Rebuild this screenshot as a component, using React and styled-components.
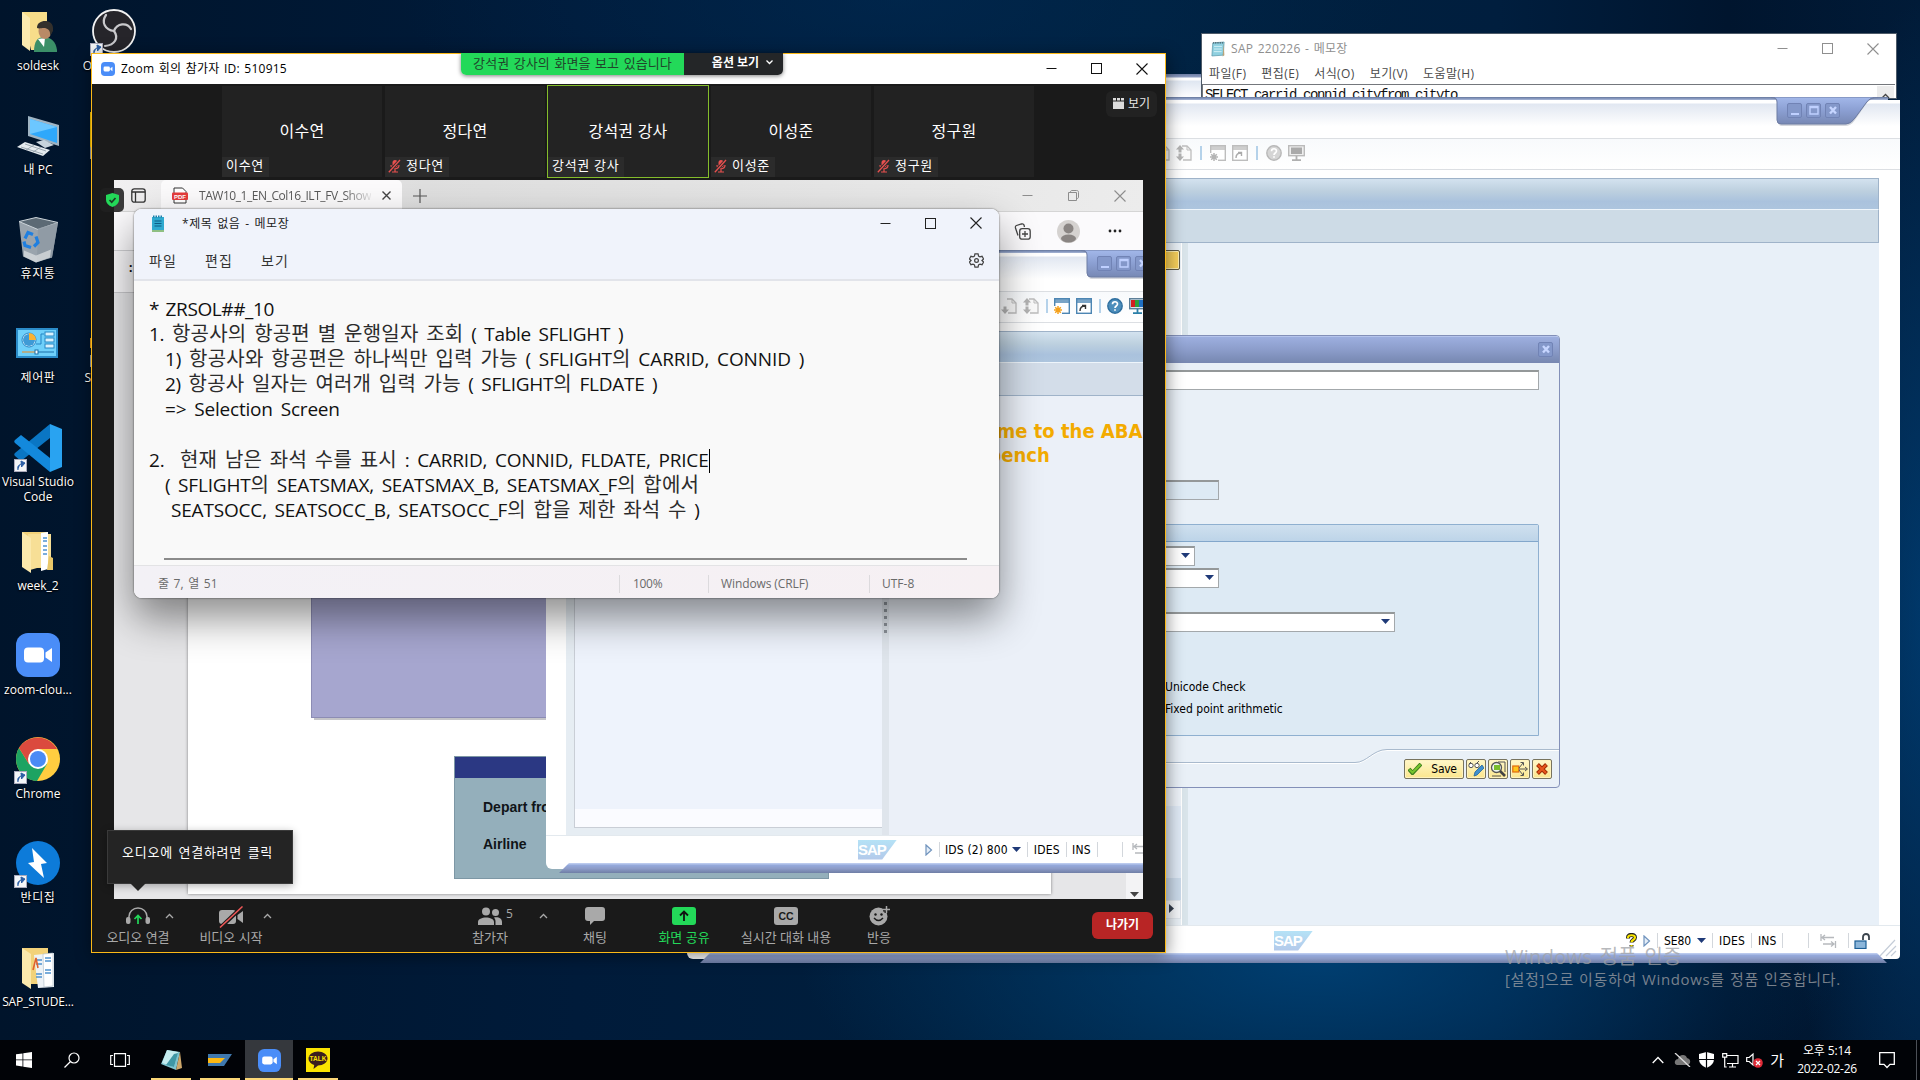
import React from "react";
import styled, { createGlobalStyle, css } from "styled-components";

const Global = createGlobalStyle`
  * { box-sizing: border-box; }
  body { margin: 0; overflow: hidden; background: #001730; }
  svg { display: block; flex: none; }
`;

const ui = `"Open Sans", "Noto Sans CJK KR", sans-serif`;
const tahoma = `"DejaVu Sans Condensed", "DejaVu Sans", "Noto Sans CJK KR", sans-serif`;

/* ---------- shared ---------- */
const Desktop = styled.main`
  position: relative;
  width: 1920px;
  height: 1080px;
  overflow: hidden;
  font-family: ${ui};
  font-size: 12px;
  line-height: 16px;
  background:
    radial-gradient(ellipse 520px 200px at 1320px 960px, rgba(0, 68, 122, 0.85), rgba(0, 60, 112, 0) 100%),
    radial-gradient(ellipse 160px 620px at 1930px 620px, rgba(0, 70, 130, 0.7), rgba(0, 50, 100, 0)),
    radial-gradient(ellipse 500px 160px at 900px 0, rgba(0, 44, 88, 0.5), rgba(0, 40, 80, 0)),
    linear-gradient(90deg, #00142b 0, #001b3a 30%, #00213f 60%, #001e3e 78%, #00152e 90%, #011b38 100%);
`;

const Text = styled.span`
  white-space: pre;
  flex: none;
  font-size: ${(p) => p.$s || 12}px;
  font-weight: ${(p) => p.$b || 400};
  color: ${(p) => p.$c || "inherit"};
  letter-spacing: ${(p) => p.$ls || 0}px;
  word-spacing: ${(p) => p.$ws || 0}px;
`;
const Hangul = styled.span`
  font-size: 20px;
  letter-spacing: 0.2px;
  color: #2c2c2c;
`;

const Gap = styled.div`
  flex: none;
  width: ${(p) => p.$w || 0}px;
  height: ${(p) => p.$h || 0}px;
`;

/* ---------- desktop icons ---------- */
const IconColumn = styled.div`
  position: absolute;
  left: ${(p) => p.$x}px;
  top: 0;
  width: 76px;
  display: flex;
  flex-direction: column;
`;
const Shortcut = styled.div`
  height: 104px;
  padding-top: 8px;
  display: flex;
  flex-direction: column;
  align-items: center;
`;
const Art = styled.div`
  position: relative;
  width: 48px;
  height: 50px;
`;
const ArrowBadge = styled.div`
  position: absolute;
  left: 0;
  bottom: 2px;
  width: 13px;
  height: 13px;
  background: #f4f6f8;
  border: 1px solid #aab;
`;
const Label = styled.span`
  display: block;
  color: #fff;
  font-size: 12px;
  line-height: 15px;
  text-align: center;
  white-space: pre;
  letter-spacing: ${(p) => p.$ls || 0}px;
  text-shadow: 0 1px 2px #000, 0 0 2px #000;
`;

const FolderUser = () => (
  <svg width="48" height="48" viewBox="0 0 48 48">
    <path d="M8 4h25v38H17z" fill="#f7dd8a" />
    <path d="M8 4l8 6v33l-8-6z" fill="#fbeab0" />
    <path d="M20 44c0-10 3-15 10-15s12 5 13 13v2z" fill="#3b8f68" />
    <path d="M24 31l6 8 1-9z" fill="#fff" />
    <ellipse cx="31" cy="23" rx="6.5" ry="8" fill="#b98a66" />
    <path d="M23 20c0-5 4-7 8-7s9 2 8 10l-3 5c1-6-3-8-6-8s-5 1-7 0z" fill="#33302c" />
  </svg>
);
const MyPc = () => (
  <svg width="48" height="48" viewBox="0 3 48 48">
    <path d="M14 7l31 9v21l-31-10z" fill="#9fb4c3" />
    <path d="M16 10l27 8v16l-27-9z" fill="#2fa8fb" />
    <path d="M16 10l27 8-27 7z" fill="#6cc7ff" />
    <path d="M22 33l8-2 10 5-9 3z" fill="#c8d4dc" />
    <path d="M3 38l8-5 25 8-7 6z" fill="#e5ebef" />
    <path d="M7 38l22 7M11 35l21 7M12 41l8-5M19 43l8-5" stroke="#8a98a2" strokeWidth=".8" />
  </svg>
);
const Bin = () => (
  <svg width="48" height="48" viewBox="0 1.500 48 48">
    <path d="M5 7l19 6 20-5-6 35-16 5-13-6z" fill="#a7b1b9" opacity=".92" />
    <path d="M5 7l17-4 22 5-20 7z" fill="#5c6a75" stroke="#ccd4d9" />
    <path d="M24 14l20-6-6 35-15 4z" fill="#8d98a2" opacity=".8" />
    <path d="M10 36l12 5 15-6-1 8-14 5-12-6z" fill="#dfe2e4" opacity=".7" />
    <g fill="none" stroke="#1f7fe0" strokeWidth="3.200">
      <path d="M11 24l3-6 5 2" />
      <path d="M22 22l2 6-4 4" />
      <path d="M17 33l-6-2-1-4" />
    </g>
  </svg>
);
const Panel = () => (
  <svg width="48" height="48" viewBox="0 0 48 48">
    <rect x="2" y="8" width="42" height="30" fill="#2b8cc9" />
    <rect x="4" y="10" width="38" height="26" fill="#6fd0fa" />
    <circle cx="15" cy="20" r="7" fill="#e7f6ff" stroke="#2585c4" />
    <circle cx="15" cy="20" r="6" fill="#3e9ad6" />
    <path d="M15 20v-7a7 7 0 0 1 7 7z" fill="#f9b233" />
    <g fill="#d9f1fc" stroke="#2585c4">
      <rect x="31" y="12" width="9" height="4" />
      <rect x="31" y="18" width="9" height="4" />
      <rect x="31" y="24" width="9" height="4" />
    </g>
    <path d="M22 24h5v-10h3" fill="none" stroke="#2585c4" />
    <path d="M8 32h14" stroke="#f08b1e" />
    <path d="M22 32h18" stroke="#1a6fa8" />
    <rect x="21" y="30" width="3" height="4" fill="#fff" stroke="#1a6fa8" />
  </svg>
);
const Code = () => (
  <svg width="50" height="48" viewBox="1 0 50 48">
    <path d="M37 0l12 5v38l-12 5z" fill="#29a3f1" />
    <path d="M37 0v14L8 37l-6-5c-1-1-1-2 0-3z" fill="#0a76c4" />
    <path d="M37 48V34L8 11l-6 5c-1 1-1 2 0 3z" fill="#1389dc" />
  </svg>
);
const Folder = ({ docs }) => (
  <svg width="48" height="48" viewBox="0 0 48 48">
    <path d="M8 4h26v36H16z" fill="#f2d27a" />
    {docs ? (
      <g>
        <path d="M20 11l20-2v34l-16 1z" fill="#eef3f7" />
        <path d="M29 10l10-1v33l-9 1z" fill="#fff" stroke="#aab8c4" strokeWidth=".6" />
        <path d="M31 14h6M31 17h6M31 26h6M31 29h6M22 16h6M22 20h6M22 30h6M22 33h6" stroke="#4f93cf" strokeWidth="1.6" />
        <path d="M19 26l3-12 2 10" stroke="#e0632e" fill="none" strokeWidth="1.6" />
      </g>
    ) : (
      <g>
        <path d="M14 6h23v30l-21 6z" fill="#f7df96" />
        <path d="M27 5l7-1v37l-7 2z" fill="#fff" />
        <path d="M29 10h4M29 13h4M29 18h4M29 22h4M29 26h4" stroke="#4f93cf" strokeWidth="1.5" />
        <path d="M35 28l4 2v12h-6z" fill="#e9c768" />
      </g>
    )}
    <path d="M8 4l9 6v35l-9-6z" fill="#fbe9ad" />
  </svg>
);
const ZoomMark = ({ size }) => (
  <svg width={size} height={size} viewBox="0 0 44 44">
    <rect width="44" height="44" rx="12" fill="#4a8df8" />
    <rect x="8" y="14.5" width="20" height="15" rx="4" fill="#fff" />
    <path d="M29.5 19.5l6.5-4.5v14l-6.5-4.5z" fill="#fff" />
  </svg>
);
const Chrome = () => (
  <svg width="44" height="44" viewBox="0 0 44 44">
    <circle cx="22" cy="22" r="22" fill="#ffcd40" />
    <path d="M3 11A22 22 0 0 0 21 44L31 27 13 27z" fill="#1da362" />
    <path d="M22 12h19a22 22 0 0 0-38-1l10 16z" fill="#db4a3e" />
    <circle cx="22" cy="22" r="10" fill="#fff" />
    <circle cx="22" cy="22" r="8" fill="#4a8bf5" />
  </svg>
);
const Bandi = () => (
  <svg width="44" height="44" viewBox="0 0 44 44">
    <circle cx="22" cy="22" r="22" fill="#0d7bd9" />
    <path d="M16 7l15 15-6 1 3 14-16-15 6-1z" fill="#fff" />
  </svg>
);
const Obs = () => (
  <svg width="44" height="44" viewBox="0 0 44 44">
    <circle cx="22" cy="22" r="21" fill="#26252a" stroke="#f2f2f2" strokeWidth="1.8" />
    <g fill="none" stroke="#c9c9cc" strokeWidth="2.2" strokeLinecap="round">
      <path d="M22 22c-9-1-13-9-8-16" />
      <path d="M22 22c3-8 13-9 17-2" />
      <path d="M22 22c5 7 1 14-9 15" />
    </g>
  </svg>
);
const ShortcutArrow = () => (
  <ArrowBadge>
    <svg width="11" height="11" viewBox="0 0 11 11">
      <path d="M3 10C2 6 4 4.500 6.500 4.500V7L10 3 6 1v1.500" fill="#2c5fa5" stroke="#2c5fa5" />
    </svg>
  </ArrowBadge>
);

const shortcuts = [
  { name: "soldesk", art: <FolderUser /> },
  { name: "내 PC", art: <MyPc /> },
  { name: "휴지통", art: <Bin />, ls: 0.6 },
  { name: "제어판", art: <Panel />, ls: 0.6 },
  { name: "Visual Studio\nCode", art: <Code />, link: true },
  { name: "week_2", art: <Folder /> },
  { name: "zoom-clou...", art: <ZoomMark size={44} />, pad: true },
  { name: "Chrome", art: <Chrome />, link: true, pad: true },
  { name: "반디집", art: <Bandi />, link: true, pad: true, ls: 0.6 },
  { name: "SAP_STUDE...", art: <Folder docs />, ls: -0.15 },
];
const ArtPad = styled.div`
  padding: ${(p) => (p.$on ? "1px 2px" : "0")};
`;
const Sliver = styled.div`
  width: 16px;
  height: ${(p) => p.$h}px;
  margin: 0 0 0 14px;
  background: ${(p) => p.$bg};
`;

/* ---------- SAP GUI ---------- */
const SapShell = styled.section`
  position: absolute;
  left: ${(p) => p.$x}px;
  top: ${(p) => p.$y}px;
  width: ${(p) => p.$w}px;
  height: ${(p) => p.$h}px;
  display: flex;
  flex-direction: column;
  font-family: ${tahoma};
`;
const SapTopEdge = styled.div`
  flex: none;
  height: 3px;
  margin-right: ${(p) => p.$r || 0}px;
  background: linear-gradient(#66779b, #8496bd 50%, #a9b7d6);
`;
const SapFrame = styled.div`
  flex: 1;
  min-height: 0;
  display: flex;
  flex-direction: column;
  background: #fff;
  border-radius: 0 6px 4px 6px;
  padding-bottom: 6px;
`;
const SapBottomEdge = styled.div`
  flex: none;
  position: relative;
  height: 10px;
  margin: -6px 13px 0;
  background: linear-gradient(#c5d3f3 0, #94a8da 25%, #8d9cc8 55%, #6f7ea6);
  clip-path: polygon(10px 0, calc(100% - 10px) 0, 100% 100%, 0 100%);
`;
const SapMenu = styled.div`
  flex: none;
  height: 39px;
  border-bottom: 1px solid #dcdfe3;
  background: linear-gradient(#fff 0, #fff 3px, #e1e7f1 4px, #fff 26px);
`;
const SapTools = styled.div`
  flex: none;
  height: 31px;
  display: flex;
  align-items: center;
  gap: 6px;
  padding: 0 0 3px ${(p) => p.$pad}px;
  border-bottom: 1px solid #dcdfe3;
  background: linear-gradient(#f8fafc, #fff);
`;
const ToolSep = styled.div`
  width: 2px;
  height: 14px;
  margin: 0 ${(p) => (p.$tight ? 0.5 : 2)}px;
  background: #b5d2ea;
`;
const SapBody = styled.div`
  flex: 1;
  min-height: 0;
  display: flex;
  flex-direction: column;
  padding: 8px 21px 0 20px;
`;
const SapTitleBand = styled.div`
  flex: none;
  height: 32px;
  border: 1px solid #9fb3c9;
  border-bottom: 1px solid #eef5fb;
  background: linear-gradient(#d3e2ef, #bdd0df 40%, #aac2dd 75%, #adc5de);
`;
const SapSubBand = styled.div`
  flex: none;
  height: 33px;
  border: 1px solid #9fb3c9;
  border-top: 0;
  background: ${(p) => p.$bg || "#cddbe6"};
`;
const SapContent = styled.div`
  flex: 1;
  min-height: 0;
  display: flex;
  background: ${(p) => p.$bg || "#e8f0f8"};
`;
const SapStatus = styled.div`
  flex: none;
  height: 28px;
  display: flex;
  align-items: center;
  padding: ${(p) => p.$pt || 0}px 0 0 ${(p) => p.$pad}px;
  background: #fff;
  border-top: 1px solid #e3e9ee;
  color: #000;
  font-size: 12px;
`;
const StatusSep = styled.div`
  width: 1px;
  height: 15px;
  background: #d3d7dc;
  margin: 0 ${(p) => p.$r || 0}px 0 ${(p) => p.$l || 0}px;
`;
const SapTab = styled.div`
  position: absolute;
  left: ${(p) => p.$x}px;
  top: 0;
  width: 119px;
  height: 32px;
`;
const SapTabButtons = styled.div`
  position: absolute;
  left: 16px;
  top: 6px;
  display: flex;
  gap: 4px;
`;
const TabButton = styled.div`
  width: 15px;
  height: 15px;
  display: grid;
  place-items: center;
  border: 1px solid #7183b5;
  border-radius: 2px;
  background: #8498ca;
`;
const glyphs = {
  min: <path d="M1 9h8" stroke="#bfd0ff" strokeWidth="2" />,
  max: <path d="M1 1.500h8v7.500h-8zM1 2.500h8" fill="none" stroke="#bfd0ff" strokeWidth="1.400" />,
  close: <path d="M2 2l6 6.500M8 2l-6 6.500" stroke="#c6d5ff" strokeWidth="2.400" />,
};
const SapGlyph = ({ kind }) => (
  <svg width="10" height="11" viewBox="0 0 10 11">{glyphs[kind]}</svg>
);
const TabHandle = ({ x }) => (
  <SapTab $x={x}>
    <svg width="119" height="32" viewBox="0 0 119 32">
      <defs>
        <linearGradient id="tabfill" x1="0" y1="0" x2="0" y2="1">
          <stop offset="0" stopColor="#a3b8ea" />
          <stop offset=".5" stopColor="#8b9fd2" />
          <stop offset="1" stopColor="#7788b4" />
        </linearGradient>
      </defs>
      <path d="M0 1q7 1 7 5v18q0 5 4 5h63q6 0 10-6l11-16q4-6 12-6z" fill="rgba(90,100,120,.25)" />
      <path d="M0 0q6 0 6 5v18q0 4 4 4h65q5 0 9-6l11-15q4-6 12-6z" fill="url(#tabfill)" stroke="#6d7ca3" />
    </svg>
    <SapTabButtons>
      <TabButton><SapGlyph kind="min" /></TabButton>
      <TabButton><SapGlyph kind="max" /></TabButton>
      <TabButton><SapGlyph kind="close" /></TabButton>
    </SapTabButtons>
  </SapTab>
);
const ScrollDoc = ({ both }) => (
  <svg width="16" height="16" viewBox="0 0 16 16">
    <path d="M6 1h5l4 4v10H7" fill="#fafafa" stroke="#bdbdbd" strokeWidth="1.300" />
    <path d="M11 1v4h4" fill="none" stroke="#bdbdbd" />
    {both && <path d="M4 0l4 4.500H5.500v3h-3v-3H0z" fill="#b3b3b3" />}
    <path d="M4 16l4-4.500H5.500v-3h-3v3H0z" fill="#b3b3b3" />
  </svg>
);
const WinIcon = ({ tone, star }) => (
  <svg width="16" height="16" viewBox="0 0 16 16">
    <rect x=".7" y=".7" width="14.600" height="14.600" fill="#fff" stroke={tone} strokeWidth="1.400" />
    <rect x="1" y="1" width="14" height="4" fill={tone} opacity=".75" />
    {star ? (
      <g>
        <rect x="0" y="8" width="8" height="8" fill="#fff" />
        <path d="M4 8v8M0 12h8M1.200 9.200l5.600 5.600M6.800 9.200l-5.600 5.600" stroke={star} strokeWidth="1.500" />
      </g>
    ) : (
      <path d="M4 13c0-3 1-5 5-5M6 7.500h3.500V11" fill="none" stroke={tone === "#bdbdbd" ? "#aaa" : "#333"} strokeWidth="1.400" />
    )}
  </svg>
);
const HelpIcon = ({ fill, ring }) => (
  <svg width="16" height="16" viewBox="0 0 16 16">
    <circle cx="8" cy="8" r="7.200" fill={fill} stroke={ring} strokeWidth="1.400" />
    <path d="M5.500 6.200C5.500 3 10.500 3 10.500 6c0 2-2.500 2-2.500 4M8 11.200v1.600" fill="none" stroke="#fff" strokeWidth="1.700" />
  </svg>
);
const Monitor = ({ color }) => (
  <svg width="17" height="16" viewBox="0 0 17 16">
    <rect x=".7" y=".7" width="15.600" height="10" fill={color ? "#d9e6ee" : "#eee"} stroke={color ? "#5d7f98" : "#bbb"} strokeWidth="1.400" />
    {color ? (
      <g>
        <rect x="2" y="2" width="4" height="7" fill="#d42020" />
        <rect x="6" y="2" width="4" height="7" fill="#2fa03c" />
        <rect x="10" y="2" width="5" height="7" fill="#1f6fc2" />
      </g>
    ) : (
      <rect x="3" y="2.500" width="11" height="6.500" fill="#aaa" />
    )}
    <path d="M8.500 11v4M4 15.200h9" stroke={color ? "#2a7fa8" : "#b0b0b0"} strokeWidth="1.800" />
  </svg>
);
const SapLogoBox = styled.div`
  width: 39px;
  height: 20px;
  clip-path: polygon(0 0, 100% 0, 62% 100%, 0 100%);
  background: linear-gradient(#b5e2f6, #b3c9ea);
  color: #fff;
  font: bold 15px/20px "Liberation Sans", sans-serif;
  letter-spacing: -1px;
`;
const Caret = ({ c = "#1f3a78", w = 9 }) => (
  <svg width={w} height="5" viewBox="0 0 9 5"><path d="M0 0h9L4.500 5z" fill={c} /></svg>
);
const PlayMark = () => (
  <svg width="8" height="12" viewBox="0 0 8 12"><path d="M1 1l5.500 5L1 11z" fill="#e5eef8" stroke="#6f93bd" strokeWidth="1.200" /></svg>
);
const Swap = () => (
  <svg width="17" height="14" viewBox="0 0 17 14">
    <path d="M1 0v7M15.500 7v7M2 3.500h12M5 1L2 3.500 5 6M14 10H3M11 7.500l3 2.500-3 2.500" fill="none" stroke="#b6b9bd" strokeWidth="1.300" />
  </svg>
);

const NavPane = styled.div`
  width: 475px;
  display: flex;
  flex-direction: column;
  align-items: flex-end;
  padding-top: 7px;
  background: #e9f0f6;
  border-right: 1px solid #fff;
`;
const NavButton = styled.div`
  width: 460px;
  height: 20px;
  margin-right: 1px;
  border: 1px solid #5f5a46;
  border-radius: 2px;
  box-shadow: inset 0 0 0 1px #fdeeb0;
  background: #f6cf5b;
`;
const NavFill = styled.div`
  width: 100%;
  height: ${(p) => p.$h}px;
  background: ${(p) => p.$bg};
`;
const NavScroll = styled.div`
  width: 100%;
  height: 19px;
  display: flex;
  align-items: center;
  justify-content: flex-end;
  padding: 0 6px 2px 0;
  background: #f4f6f9;
  border: 1px solid #dfe5ec;
`;
const Splitter = styled.div`
  width: 6px;
  background: #d9e4ea;
`;
const Grip = styled.div`
  position: absolute;
  right: 3px;
  bottom: 6px;
`;

const Dialog = styled.section`
  position: absolute;
  left: 760px;
  top: 335px;
  width: 800px;
  height: 453px;
  display: flex;
  flex-direction: column;
  border: 1px solid #8390b8;
  border-radius: 4px;
  overflow: hidden;
  background: #e9f0f7;
  font-family: ${tahoma};
`;
const DialogHead = styled.div`
  height: 27px;
  display: flex;
  align-items: center;
  justify-content: flex-end;
  padding: 0 6px 0 0;
  background: linear-gradient(#9dafdf, #8c9dcb 50%, #7889b2);
  border-top: 1px solid #b5c4ec;
  border-bottom: 1px solid #7888b2;
`;
const DialogBody = styled.div`
  flex: 1;
  display: flex;
  flex-direction: column;
  align-items: flex-start;
  padding: 7px 20px 0;
`;
const Field = styled.div`
  width: ${(p) => p.$w}px;
  height: 20px;
  margin-bottom: ${(p) => p.$mb || 0}px;
  display: flex;
  align-items: center;
  justify-content: flex-end;
  padding: 0 4px 2px 0;
  border: 1px solid #a3a8ab;
  border-top: 2px solid #949899;
  background: ${(p) => p.$bg || "#fff"};
`;
const Group = styled.div`
  width: 758px;
  height: 212px;
  border: 1px solid #8fb0d0;
  border-radius: 2px 2px 0 0;
  background: #ddeaf4;
`;
const GroupHead = styled.div`
  height: 17px;
  margin-bottom: 4px;
  border-bottom: 1px solid #82a7cb;
  background: linear-gradient(#cfe0ef, #bdd4e8);
`;
const CheckLabel = styled.div`
  height: 22px;
  padding-left: 383px;
  font-size: 12px;
  line-height: 22px;
  color: #000;
  white-space: pre;
`;
const DialogFoot = styled.div`
  position: relative;
  height: 40px;
  display: flex;
  align-items: center;
  justify-content: flex-end;
  gap: 2px;
  padding: 4px 7px 0 0;
`;
const FootCurve = styled.div`
  position: absolute;
  left: 0;
  top: 1px;
`;
const YellowButton = styled.div`
  position: relative;
  width: ${(p) => p.$w || 20}px;
  height: 20px;
  display: flex;
  align-items: center;
  justify-content: center;
  gap: 9px;
  padding-right: ${(p) => p.$pr || 0}px;
  border: 1px solid #77735f;
  border-radius: 2px;
  background: linear-gradient(#fff7c9, #fbe68d);
  box-shadow: inset 0 0 0 1px #fff3bd;
  font-size: 12px;
  color: #000;
`;

const MainSap = () => (
  <SapShell $x={687} $y={97} $w={1213} $h={866}>
    <SapTopEdge $r={12} />
    <SapFrame>
      <SapMenu />
      <SapTools $pad={467}>
        <ScrollDoc />
        <ScrollDoc both />
        <ToolSep />
        <WinIcon tone="#bdbdbd" star="#b5b5b5" />
        <WinIcon tone="#bdbdbd" />
        <ToolSep />
        <HelpIcon fill="#d5d5d5" ring="#b8b8b8" />
        <Monitor />
      </SapTools>
      <SapBody>
        <SapTitleBand />
        <SapSubBand />
        <SapContent>
          <NavPane>
            <NavButton />
            <NavFill $h={536} $bg="#edf2f8" />
            <NavFill $h={72} $bg="#dfe9f5" />
            <NavFill $h={22} $bg="#cbdaea" />
            <NavScroll>
              <svg width="5" height="9" viewBox="0 0 5 9"><path d="M0 0l5 4.500L0 9z" fill="#333d4c" /></svg>
            </NavScroll>
          </NavPane>
          <Splitter />
        </SapContent>
      </SapBody>
      <SapStatus $pad={587} $pt={2}>
        <SapLogoBox>SAP</SapLogoBox>
        <Gap $w={313} />
        <svg width="11" height="15" viewBox="0 0 11 15">
          <path d="M2 5.500V4.500c0-3.500 7-3.500 7 0 0 2.500-3.500 2.500-3.500 5M5.500 12v1.500" fill="none" stroke="#222" strokeWidth="4" />
          <path d="M2 5.200V4.500c0-3 7-3 7 0 0 2.500-3.500 2.500-3.500 4.700M5.500 12v1.300" fill="none" stroke="#f8e400" strokeWidth="2.200" />
        </svg>
        <Gap $w={6} />
        <PlayMark />
        <StatusSep $l={6} $r={6} />
        <Text $ls={-0.1}>SE80</Text>
        <Gap $w={6} />
        <Caret />
        <StatusSep $l={6} $r={6} />
        <Text $ls={0.2}>IDES</Text>
        <StatusSep $l={6} $r={6} />
        <Text $ls={0.1}>INS</Text>
        <StatusSep $l={6} $r={25} />
        <StatusSep $r={11} />
        <Swap />
        <StatusSep $l={11} $r={5} />
        <svg width="17" height="16" viewBox="0 0 17 16">
          <rect x="1" y="8" width="11" height="7.500" fill="#8cb6da" stroke="#1d5f96" strokeWidth="1.200" />
          <path d="M9 7V4c0-4 6-4 6 0v3" fill="none" stroke="#3b444d" strokeWidth="1.800" />
        </svg>
      </SapStatus>
    </SapFrame>
    <SapBottomEdge />
    <TabHandle x={1084} />
    <Grip>
      <svg width="18" height="18" viewBox="0 0 18 18">
        <path d="M1 17L16 1M7 17L17 7M12 17l5-5" stroke="#c5cdd8" strokeWidth="1.200" />
      </svg>
    </Grip>
  </SapShell>
);

const CreateDialog = () => (
  <Dialog>
    <DialogHead><TabButton><SapGlyph kind="close" /></TabButton></DialogHead>
    <DialogBody>
      <Field $w={758} $mb={90} />
      <Field $w={438} $mb={24} $bg="#ddeaf4" />
      <Group>
        <GroupHead />
        <Field $w={413} $mb={2}><Caret /></Field>
        <Field $w={437} $mb={24}><Caret /></Field>
        <Field $w={613} $mb={44}><Caret /></Field>
        <CheckLabel>Unicode Check</CheckLabel>
        <CheckLabel>Fixed point arithmetic</CheckLabel>
      </Group>
    </DialogBody>
    <DialogFoot>
      <FootCurve>
        <svg width="798" height="18" viewBox="0 0 798 18">
          <path d="M0 15.500h594c12 0 18-13 32-13h172" fill="none" stroke="#fff" />
          <path d="M0 14.500h594c12 0 18-13 32-13h172" fill="none" stroke="#a9bacd" />
        </svg>
      </FootCurve>
      <YellowButton $w={60} $pr={3}>
        <svg width="14" height="12" viewBox="0 0 14 12"><path d="M1 6l3.500 4L13 1" fill="none" stroke="#3d7f1e" strokeWidth="4" /><path d="M1.500 6.500l3 3L12.500 1.500" fill="none" stroke="#78c52e" strokeWidth="2" /></svg>
        <Text $ls={-0.3}>Save</Text>
      </YellowButton>
      <YellowButton>
        <svg width="16" height="16" viewBox="0 0 16 16">
          <circle cx="3" cy="4.500" r="2.200" fill="#fff" stroke="#555" /><circle cx="9" cy="4.500" r="2.200" fill="#fff" stroke="#555" /><path d="M1 3l2-2M9 2l2-2" stroke="#555" />
          <path d="M6 15l1-4 7-7 2 3-7 7z" fill="#3f90cf" stroke="#23659c" strokeWidth=".8" />
        </svg>
      </YellowButton>
      <YellowButton>
        <svg width="16" height="16" viewBox="0 0 16 16">
          <path d="M8 1h7v10M2 15h9" fill="none" stroke="#555" />
          <circle cx="6.500" cy="6.500" r="5" fill="#eef6ee" stroke="#555" strokeWidth="1.300" /><rect x="4" y="4" width="6" height="5" fill="#79bd2c" />
          <path d="M10 10l5 5" stroke="#444" strokeWidth="2.600" />
        </svg>
      </YellowButton>
      <YellowButton>
        <svg width="16" height="16" viewBox="0 0 16 16">
          <rect x=".8" y="5" width="6" height="6" fill="#ffc61a" stroke="#e06a10" strokeWidth="1.200" />
          <path d="M7 8h8M13 6l2.500 2L13 10M7 7l4-5M8.500 1.500h3v3M7 9l4 5M8.500 14.500h3v-3" fill="none" stroke="#555" />
        </svg>
      </YellowButton>
      <YellowButton>
        <svg width="12" height="12" viewBox="0 0 12 12"><path d="M1.500 1.500l9 9M10.500 1.500l-9 9" stroke="#9c2a04" strokeWidth="4" /><path d="M2 2l8 8M10 2l-8 8" stroke="#e8571c" strokeWidth="2.200" /></svg>
      </YellowButton>
    </DialogFoot>
  </Dialog>
);

/* ---------- classic notepad behind ---------- */
const OldPad = styled.section`
  position: absolute;
  left: 1201px;
  top: 33px;
  width: 696px;
  height: 66px;
  display: flex;
  flex-direction: column;
  overflow: hidden;
  border: 1px solid #4d5a68;
  background: #fff;
`;
const OldTitle = styled.div`
  height: 28px;
  flex: none;
  display: flex;
  align-items: center;
  padding: 1px 17px 0 9px;
  color: #8f8f8f;
`;
const OldMenu = styled.div`
  height: 22px;
  flex: none;
  display: flex;
  align-items: center;
  gap: 15px;
  padding: 2px 0 0 7px;
  color: #4a4a4a;
`;
const OldText = styled.div`
  flex: 1;
  display: flex;
  justify-content: space-between;
  border-top: 1px solid #74777c;
  border-left: 1px solid #74777c;
  padding: 3px 1px 0 2px;
  margin-right: 1px;
  font: 14px/14px "Liberation Mono", monospace;
  letter-spacing: -1.4px;
  color: #111;
  white-space: pre;
`;
const OldScroll = styled.div`
  width: 17px;
  height: 20px;
  margin-top: -2px;
  display: grid;
  place-items: center;
  background: #ececec;
`;
const NotepadIcon = ({ size = 16 }) => (
  <svg width={size} height={size + 2} viewBox="0 0 16 18">
    <path d="M2 2l13-1-1 15-13 1z" fill="#8fd0e0" stroke="#5a97a8" strokeWidth=".8" />
    <path d="M3.500 6h9M3.400 9h9M3.200 12h9" stroke="#d9f3f8" />
    <path d="M2.500 2h12" stroke="#37474f" strokeWidth="1.500" strokeDasharray="1 1" />
    <path d="M14.500 3l.8 13-2 1.500z" fill="#b9a47a" />
  </svg>
);
const WinControls = styled.div`
  display: flex;
  align-items: center;
  gap: ${(p) => p.$gap}px;
  margin-left: auto;
  color: ${(p) => p.$c || "#111"};
`;
const Controls = ({ gap = 35, c, restore }) => (
  <WinControls $gap={gap} $c={c}>
    <svg width="11" height="11" viewBox="0 0 11 11"><path d="M.5 5.500h10" stroke="currentColor" /></svg>
    <svg width="11" height="11" viewBox="0 0 11 11">
      {restore ? (
        <path d="M2.500 2.500V2c0-1 .5-1.500 1.500-1.500h4.500c1.500 0 2 .5 2 2V7c0 1-.5 1.500-1.500 1.500M.5 2.500h8v8h-8z" fill="none" stroke="currentColor" />
      ) : (
        <rect x=".5" y=".5" width="10" height="10" fill="none" stroke="currentColor" />
      )}
    </svg>
    <svg width="12" height="12" viewBox="0 0 12 12"><path d="M.5.5l11 11M11.500.5l-11 11" stroke="currentColor" strokeWidth="1.100" /></svg>
  </WinControls>
);
const BackEdge = styled.div`
  position: absolute;
  left: 1100px;
  top: 74px;
  width: 101px;
  height: 24px;
  background: linear-gradient(#6d7ea4 0, #8d9cc0 3px, #fff 4px, #fff 6px, #dfe6f1 7px, #fbfcfe 22px);
`;

/* ---------- Zoom meeting ---------- */
const Meeting = styled.section`
  position: absolute;
  left: 91px;
  top: 53px;
  width: 1075px;
  height: 900px;
  display: flex;
  flex-direction: column;
  border: 1px solid #fbb917;
  background: #1a1a1a;
  box-shadow: 1px 3px 16px rgba(0, 0, 0, 0.45);
`;
const MeetingTitle = styled.header`
  flex: none;
  height: 30px;
  display: flex;
  align-items: center;
  padding: 0 17px 1px 9px;
  gap: 6px;
  background: #fff;
  color: #000;
`;
const Banner = styled.div`
  position: absolute;
  left: 369px;
  top: -1px;
  display: flex;
  height: 22px;
  border-radius: 0 0 5px 5px;
  overflow: hidden;
  box-shadow: 0 1px 4px rgba(0, 0, 0, 0.5);
`;
const BannerPart = styled.div`
  width: ${(p) => p.$w}px;
  display: flex;
  align-items: center;
  justify-content: center;
  gap: 7px;
  padding: 0 0 3px ${(p) => p.$pl || 0}px;
  background: ${(p) => p.$bg};
  color: ${(p) => p.$c};
`;
const Strip = styled.div`
  flex: none;
  height: 96px;
  display: flex;
  align-items: flex-start;
  gap: 3px;
  padding: 2px 0 0 130px;
`;
const Tile = styled.div`
  width: 160px;
  height: 91px;
  display: flex;
  flex-direction: column;
  justify-content: space-between;
  align-items: flex-start;
  background: #222;
  color: #fff;
  ${(p) => p.$on && css`box-shadow: 0 0 0 1px #84bd2b; background: #232323;`}
`;
const TileName = styled.div`
  width: 100%;
  padding: 34px 0 0 0;
  line-height: 22px;
  text-align: center;
`;
const TileTag = styled.div`
  height: 20px;
  display: flex;
  align-items: center;
  gap: 5px;
  padding: 0 5px 3px ${(p) => (p.$muted ? 3 : 4)}px;
  background: #2b2b2b;
  line-height: 17px;
`;
const ViewButton = styled.div`
  width: 51px;
  height: 26px;
  margin: 5px 0 0 69px;
  display: flex;
  align-items: center;
  gap: 4px;
  padding: 0 0 1px 7px;
  border-radius: 6px;
  background: #222;
  color: #e8e8e8;
`;
const MutedMic = () => (
  <svg width="13" height="14" viewBox="0 0 13 14">
    <rect x="4.500" y="1" width="5" height="7.500" rx="2.500" fill="#e8504f" />
    <path d="M3 6c0 5 8 5 8 0M7 10v3M4 13h6" fill="none" stroke="#e8504f" strokeWidth="1.200" />
    <path d="M1 13L12 1" stroke="#2b2b2b" strokeWidth="3" />
    <path d="M.8 13.200L12 1" stroke="#e8504f" strokeWidth="1.300" />
  </svg>
);
const Share = styled.div`
  position: relative;
  flex: none;
  width: 1029px;
  height: 719px;
  margin-left: 22px;
  overflow: hidden;
  background: #e6e6e8;
`;
const ToolBar = styled.footer`
  flex: none;
  height: 52px;
  display: flex;
  align-items: center;
  color: #a9a9a9;
`;
const Tool = styled.div`
  position: relative;
  width: ${(p) => p.$w}px;
  height: 52px;
  margin-left: ${(p) => p.$ml || 0}px;
  display: flex;
  flex-direction: column;
  align-items: center;
  padding-top: 7px;
  gap: 3px;
  color: ${(p) => (p.$on ? "#23d959" : "inherit")};
`;
const ToolIcon = styled.div`
  height: 20px;
  display: grid;
  place-items: center;
`;
const Chev = styled.div`
  position: absolute;
  top: 14px;
  left: calc(50% + ${(p) => p.$dx}px);
`;
const Count = styled.span`
  position: absolute;
  top: 7px;
  left: calc(50% + 16px);
  font-size: 12px;
`;
const Up = ({ c = "#a9a9a9" }) => (
  <svg width="9" height="6" viewBox="0 0 9 6"><path d="M1 5l3.500-3.500L8 5" fill="none" stroke={c} strokeWidth="1.300" /></svg>
);
const Leave = styled.button`
  width: 61px;
  height: 27px;
  margin: 1px 0 0 188px;
  padding: 0 0 2px;
  border: 0;
  border-radius: 6px;
  background: #b82525;
  color: #fff;
  font: 600 12px/18px ${ui};
`;
const Tooltip = styled.div`
  position: absolute;
  left: 107px;
  top: 830px;
  width: 186px;
  height: 54px;
  padding: 12px 0 0 14px;
  border: 1px solid #3a3a3a;
  background: #242424;
  color: #fff;
  line-height: 18px;
  box-shadow: 0 2px 8px rgba(0, 0, 0, 0.3);
  &::after {
    content: "";
    position: absolute;
    left: 22px;
    top: 52px;
    border: 8px solid transparent;
    border-top-color: #242424;
    border-bottom: 0;
  }
`;

/* shared browser */
const EdgeTabs = styled.div`
  height: 32px;
  display: flex;
  align-items: center;
  padding-right: 17px;
  background: linear-gradient(100deg, #f1f0f1 0, #dedede 30%, #e3e3e3 60%, #ececec);
  border-bottom: 1px solid #d5d5d5;
`;
const EdgeTab = styled.div`
  width: 241px;
  height: 32px;
  margin: 0 0 0 15px;
  display: flex;
  align-items: center;
  gap: 11px;
  padding-left: 11px;
  background: #fbfafb;
  border-radius: 5px 5px 0 0;
`;
const TabTitle = styled.div`
  width: 172px;
  overflow: hidden;
  white-space: nowrap;
  font-size: 12px;
  letter-spacing: -0.45px;
  color: #5a5a5a;
  mask-image: linear-gradient(90deg, #000 84%, transparent 102%);
`;
const EdgeBar = styled.div`
  height: 39px;
  display: flex;
  align-items: center;
  justify-content: flex-end;
  padding-right: 21px;
  border-bottom: 1px solid #cfcfd2;
  background: #fbfafc;
`;
const PdfBar = styled.div`
  height: 42px;
  padding: 9px 0 0 15px;
  border-bottom: 1px solid #c8c8cb;
  background: #f6f5f7;
  font-weight: 700;
`;
const Page = styled.div`
  width: 863px;
  height: 601px;
  margin-left: 74px;
  padding: 0 0 0 123px;
  background: #fff;
  box-shadow: 0 0 3px rgba(0, 0, 0, 0.45);
`;
const PurpleBox = styled.div`
  width: 560px;
  height: 425px;
  border: 1px solid #8c8cb4;
  background: #a6a6cf;
  box-shadow: 3px 2px 0 #c4c4c8;
`;
const FlightCard = styled.div`
  width: 375px;
  height: 123px;
  margin: 38px 0 0 143px;
  border: 1px solid #7d97a5;
  background: #94afbb;
  font: bold 14px/18px "Liberation Sans", sans-serif;
  color: #101418;
`;
const CardHead = styled.div`
  height: 21px;
  background: #2b3883;
`;
const CardRow = styled.div`
  height: 37px;
  padding: 20px 0 0 28px;
`;
const ScrollCorner = styled.div`
  position: absolute;
  right: 0;
  bottom: 0;
  width: 17px;
  height: 26px;
  display: grid;
  place-items: center;
  padding-top: 16px;
  background: #f3f3f5;
`;
const Welcome = styled.div`
  flex: 1;
  padding: 23px 0 0 47px;
  white-space: pre;
  font: bold 20px/24px "DejaVu Sans Condensed", "DejaVu Sans", sans-serif;
  color: #f3ab00;
`;
const TreePane = styled.div`
  width: 316px;
  flex: none;
  padding: 0 0 7px 8px;
  background: #e6edf3;
`;
const TreeBody = styled.div`
  height: 100%;
  border: 1px solid #c9ced6;
  border-right: 0;
  background: linear-gradient(#eef3fc calc(100% - 18px), #fafbff 0);
`;
const DotHandle = styled.div`
  flex: none;
  width: 7px;
  display: flex;
  flex-direction: column;
  align-items: center;
  gap: 4px;
  padding-top: 206px;
  background: #dfe5ec;
  & > i { width: 3px; height: 3px; background: #8e949c; }
`;
const ShieldBadge = styled.div`
  position: absolute;
  left: 100px;
  top: 188px;
  width: 24px;
  height: 24px;
  display: grid;
  place-items: center;
  border-radius: 5px;
  background: rgba(32, 32, 32, 0.88);
`;

/* notepad in shared screen */
const Pad = styled.div`
  position: absolute;
  left: 20px;
  top: 29px;
  width: 865px;
  height: 389px;
  display: flex;
  flex-direction: column;
  overflow: hidden;
  border-radius: 8px;
  background: #f9f9f9;
`;
const PadShadow = styled.div`
  position: absolute;
  left: 20px;
  top: 29px;
  width: 865px;
  height: 389px;
  border-radius: 8px;
  box-shadow: 0 0 2px rgba(0, 0, 0, 0.7), 0 20px 40px rgba(0, 0, 0, 0.45);
`;
const PadTitle = styled.div`
  flex: none;
  height: 30px;
  display: flex;
  align-items: center;
  padding: 0 17px 2px 18px;
  background: #f0f3fb;
  color: #222;
  & > span { padding-top: 2px; }
`;
const PadMenu = styled.div`
  flex: none;
  height: 42px;
  display: flex;
  align-items: center;
  justify-content: space-between;
  padding: 2px 15px 0 15px;
  background: #f0f3fb;
  border-bottom: 2px solid #e2e4ea;
  color: #333;
`;
const PadMenuItems = styled.div`
  display: flex;
  gap: 28px;
  padding-top: 1px;
`;
const PadBody = styled.div`
  flex: 1;
  padding: 16px 0 0 15px;
  color: #111;
`;
const Line = styled.div`
  height: 25.1px;
  line-height: 24px;
  display: flex;
  padding-left: ${(p) => p.$in || 0}px;
`;
const CursorBar = styled.div`
  width: 1px;
  height: 24px;
  margin-top: 1px;
  background: #000;
`;
const Rule = styled.div`
  width: 803px;
  height: 2px;
  margin: 35px 0 0 15px;
  background: #8b8b8b;
`;
const PadStatus = styled.div`
  flex: none;
  height: 33px;
  display: flex;
  align-items: center;
  padding: 3px 0 0 0;
  border-top: 1px solid #e3e3e5;
  background: linear-gradient(90deg, #f3f1f6, #f6f0f3);
  color: #6a6a6a;
`;
const PadCell = styled.div`
  width: ${(p) => p.$w}px;
  padding-left: ${(p) => p.$pl}px;
  height: 18px;
  line-height: 18px;
  border-right: ${(p) => (p.$last ? "0" : "1px solid #dcdadd")};
`;

const lines = [
  { t: "* ZRSOL##_10", ls: -0.4, ws: 2 },
  { t: "1. 항공사의 항공편 별 운행일자 조회 ( Table SFLIGHT )", ls: -0.3, ws: 3.1 },
  { t: "1) 항공사와 항공편은 하나씩만 입력 가능 ( SFLIGHT의 CARRID, CONNID )", ls: -0.08, ws: 2.9, in: 16 },
  { t: "2) 항공사 일자는 여러개 입력 가능 ( SFLIGHT의 FLDATE )", ls: -0.25, ws: 2.9, in: 16 },
  { t: "=> Selection Screen", ls: -0.2, ws: 3.2, in: 16 },
  { t: "" },
  { t: "2.  현재 남은 좌석 수를 표시 : CARRID, CONNID, FLDATE, PRICE", ls: -0.2, ws: 3, cursor: true },
  { t: "( SFLIGHT의 SEATSMAX, SEATSMAX_B, SEATSMAX_F의 합에서", ls: -0.17, ws: 2.8, in: 16 },
  { t: "SEATSOCC, SEATSOCC_B, SEATSOCC_F의 합을 제한 좌석 수 )", ls: -0.18, ws: 2.9, in: 22 },
];
const mixed = (t) =>
  t.split(/([가-힣]+)/).map((part, i) => (i % 2 ? <Hangul key={i}>{part}</Hangul> : part));

const SharedScreen = () => (
  <Share>
    <EdgeTabs>
      <Gap $w={17} />
      <svg width="15" height="15" viewBox="0 0 15 15">
        <rect x=".8" y=".8" width="13.400" height="13.400" rx="2.500" fill="none" stroke="#333" strokeWidth="1.300" />
        <path d="M1 4h13M4.500 4V14" stroke="#333" strokeWidth="1.300" />
      </svg>
      <EdgeTab>
        <svg width="16" height="17" viewBox="0 0 16 17">
          <path d="M2 1h8.500L14 4.500V16H2z" fill="#fff" stroke="#333" />
          <rect x="0" y="5.500" width="16" height="7.500" rx="1" fill="#e53b3b" />
          <text x="8" y="11.600" textAnchor="middle" fontSize="6" fontWeight="700" fontFamily="Liberation Sans" fill="#fff">PDF</text>
        </svg>
        <TabTitle>TAW10_1_EN_Col16_ILT_FV_Show</TabTitle>
        <svg width="9" height="9" viewBox="0 0 9 9"><path d="M.5.5l8 8M8.500.5l-8 8" stroke="#444" strokeWidth="1.400" /></svg>
      </EdgeTab>
      <Gap $w={11} />
      <svg width="14" height="14" viewBox="0 0 14 14"><path d="M7 0v14M0 7h14" stroke="#555" strokeWidth="1.200" /></svg>
      <Controls gap={35} c="#8d8d8d" restore />
    </EdgeTabs>
    <EdgeBar>
      <svg width="17" height="17" viewBox="0 0 17 17">
        <path d="M4 12.500L1.500 5q-.5-2 1-2.500l5-1.500q2-.5 2.500 1l.5 2" fill="none" stroke="#444" strokeWidth="1.300" />
        <rect x="5.700" y="5.700" width="10.500" height="10.500" rx="2.500" fill="none" stroke="#444" strokeWidth="1.300" />
        <path d="M11 8v6M8 11h6" stroke="#444" strokeWidth="1.300" />
      </svg>
      <Gap $w={26} />
      <svg width="23" height="23" viewBox="0 0 23 23">
        <circle cx="11.500" cy="11.500" r="11.500" fill="#d5d2d0" />
        <circle cx="11.500" cy="8.500" r="5" fill="#8a8583" />
        <ellipse cx="11.500" cy="18.500" rx="7.500" ry="4" fill="#8a8583" />
      </svg>
      <Gap $w={28} />
      <svg width="14" height="4" viewBox="0 0 14 4"><circle cx="2" cy="2" r="1.400" fill="#222" /><circle cx="7" cy="2" r="1.400" fill="#222" /><circle cx="12" cy="2" r="1.400" fill="#222" /></svg>
    </EdgeBar>
    <PdfBar>:</PdfBar>
    <Page>
      <PurpleBox />
      <FlightCard>
        <CardHead />
        <CardRow>Depart from</CardRow>
        <CardRow>Airline</CardRow>
      </FlightCard>
    </Page>
    <ScrollCorner><Caret c="#444" /></ScrollCorner>

    <SapShell $x={432} $y={70} $w={640} $h={623}>
      <SapTopEdge />
      <SapFrame>
        <SapMenu />
        <SapTools $pad={455}>
          <ScrollDoc />
          <ScrollDoc both />
          <ToolSep $tight />
          <WinIcon tone="#4d86b3" star="#f5a11c" />
          <WinIcon tone="#4d86b3" />
          <ToolSep $tight />
          <HelpIcon fill="#4b8dbb" ring="#2f6f9f" />
          <Monitor color />
        </SapTools>
        <SapBody>
          <SapTitleBand />
          <SapSubBand $bg="#d3dde9" />
          <SapContent $bg="#ebf0f8">
            <TreePane><TreeBody /></TreePane>
            <DotHandle><i /><i /><i /><i /><i /></DotHandle>
            <Welcome>{"Welcome to the ABAP\nWorkbench"}</Welcome>
          </SapContent>
        </SapBody>
        <SapStatus $pad={312}>
          <SapLogoBox>SAP</SapLogoBox>
          <Gap $w={28} />
          <PlayMark />
          <StatusSep $l={6} $r={5} />
          <Text $ls={0.15}>IDS (2) 800</Text>
          <Gap $w={4} />
          <Caret />
          <StatusSep $l={6} $r={6} />
          <Text $ls={0.25}>IDES</Text>
          <StatusSep $l={6} $r={5} />
          <Text $ls={0.3}>INS</Text>
          <StatusSep $l={6} $r={24} />
          <StatusSep $r={9} />
          <Swap />
        </SapStatus>
      </SapFrame>
      <SapBottomEdge />
      <TabHandle x={535} />
    </SapShell>

    <PadShadow />
    <Pad>
      <PadTitle>
        <svg width="12" height="17" viewBox="0 0 12 17">
          <rect y="2" width="12" height="13" fill="#2fa9cf" />
          <path d="M1 1.500h10" stroke="#1b7ea8" strokeWidth="2" strokeDasharray="1.500 1" />
          <path d="M2.500 6h7M2.500 8.500h7M2.500 11h7" stroke="#0d5c86" strokeWidth="1.200" />
          <path d="M0 16h12" stroke="#6fae5a" strokeWidth="1.500" />
        </svg>
        <Gap $w={18} />
        <Text $ls={0.6} $ws={1}>*제목 없음 - 메모장</Text>
        <Controls gap={34} c="#222" />
      </PadTitle>
      <PadMenu>
        <PadMenuItems>
          <Text $s={14} $ls={1.1}>파일</Text>
          <Text $s={14} $ls={1.1}>편집</Text>
          <Text $s={14} $ls={1.1}>보기</Text>
        </PadMenuItems>
        <svg width="15" height="15" viewBox="0 0 24 24" fill="none" stroke="#444" strokeWidth="2">
          <path d="M9.500 1.500h5l.8 3.500 2.200 1.300 3.400-1 2.400 4.200-2.600 2.500 2.600 2.500-2.400 4.200-3.400-1-2.200 1.300-.8 3.500h-5l-.8-3.500-2.200-1.300-3.400 1L.7 14.500 3.300 12 .7 9.500l2.400-4.200 3.400 1 2.200-1.300z" />
          <circle cx="12" cy="12" r="3" />
        </svg>
      </PadMenu>
      <PadBody>
        {lines.map((l, i) => (
          <Line key={i} $in={l.in}>
            <Text $s={19} $ls={l.ls} $ws={l.ws}>{mixed(l.t)}</Text>
            {l.cursor && <CursorBar />}
          </Line>
        ))}
        <Rule />
      </PadBody>
      <PadStatus>
        <PadCell $w={486} $pl={24}><Text $ls={0.2} $ws={1}>줄 7, 열 51</Text></PadCell>
        <PadCell $w={89} $pl={13}><Text $ls={-0.3}>100%</Text></PadCell>
        <PadCell $w={161} $pl={12}><Text $ls={-0.1}>Windows (CRLF)</Text></PadCell>
        <PadCell $w={129} $pl={12} $last><Text>UTF-8</Text></PadCell>
      </PadStatus>
    </Pad>
  </Share>
);

const people = [
  { name: "이수연" },
  { name: "정다연", muted: true },
  { name: "강석권 강사", on: true },
  { name: "이성준", muted: true },
  { name: "정구원", muted: true },
];

const ZoomWindow = () => (
  <Meeting>
    <MeetingTitle>
      <ZoomMark size={14} />
      <Text $ls={0.25} $ws={1}>Zoom 회의 참가자 ID: 510915</Text>
      <Controls gap={34} />
    </MeetingTitle>
    <Banner>
      <BannerPart $w={223} $bg="#23d959" $c="#20452b"><Text $s={13} $ls={0.1} $ws={1}>강석권 강사의 화면을 보고 있습니다</Text></BannerPart>
      <BannerPart $w={99} $pl={18} $bg="#242628" $c="#fff">
        <Text $b={600}>옵션 보기</Text>
        <svg width="7" height="5" viewBox="0 0 7 5"><path d="M.5.500L3.500 3.500 6.500.5" fill="none" stroke="#fff" strokeWidth="1.300" /></svg>
      </BannerPart>
    </Banner>
    <Strip>
      {people.map((p) => (
        <Tile key={p.name} $on={p.on}>
          <TileName><Text $s={16} $ls={0.2}>{p.name}</Text></TileName>
          <TileTag $muted={p.muted}>
            {p.muted && <MutedMic />}
            <Text $s={13} $ls={0.7}>{p.name}</Text>
          </TileTag>
        </Tile>
      ))}
      <ViewButton>
        <svg width="11" height="11" viewBox="0 0 11 11">
          <path d="M0 0h3v2.500H0zM4 0h3v2.500H4zM8 0h3v2.500H8zM0 3.500h11V11H0z" fill="#dcdcdc" />
        </svg>
        <Text>보기</Text>
      </ViewButton>
    </Strip>
    <SharedScreen />
    <ToolBar>
      <Tool $w={92}>
        <ToolIcon>
          <svg width="24" height="18" viewBox="0 0 24 18">
            <path d="M3 12V9.500a9 8.500 0 0 1 18 0V12" fill="none" stroke="#a9a9a9" strokeWidth="1.500" />
            <rect x="0" y="10" width="4.500" height="7" rx="2" fill="#a9a9a9" />
            <rect x="19.500" y="10" width="4.500" height="7" rx="2" fill="#a9a9a9" />
            <path d="M12 17V9M8.500 12L12 8.500l3.500 3.500" fill="none" stroke="#23d959" strokeWidth="1.700" />
          </svg>
        </ToolIcon>
        <Text $s={13}>오디오 연결</Text>
        <Chev $dx={27}><Up /></Chev>
      </Tool>
      <Tool $w={94}>
        <ToolIcon>
          <svg width="26" height="22" viewBox="0 0 26 22">
            <rect x="1" y="4" width="17" height="14" rx="3" fill="#a9a9a9" />
            <path d="M19.500 9l5.500-4v12l-5.500-4z" fill="#a9a9a9" />
            <path d="M2 22L24 1" stroke="#1a1a1a" strokeWidth="4" />
            <path d="M2 21.500L24.500.5" stroke="#ef5858" strokeWidth="1.500" />
          </svg>
        </ToolIcon>
        <Text $s={13}>비디오 시작</Text>
        <Chev $dx={32}><Up /></Chev>
      </Tool>
      <Tool $w={100} $ml={162}>
        <ToolIcon>
          <svg width="24" height="18" viewBox="0 0 24 18">
            <circle cx="8" cy="4.500" r="4" fill="#a9a9a9" /><circle cx="17.500" cy="5.500" r="3.500" fill="#a9a9a9" />
            <path d="M0 18v-3c0-6 16-6 16 0v3zM17.500 18v-4q0-2-1.500-3.500c4-1 8 .5 8 4.500v3z" fill="#a9a9a9" />
          </svg>
        </ToolIcon>
        <Text $s={13}>참가자</Text>
        <Count>5</Count>
        <Chev $dx={49}><Up /></Chev>
      </Tool>
      <Tool $w={110}>
        <ToolIcon>
          <svg width="20" height="18" viewBox="0 0 20 18"><path d="M3 0h14q3 0 3 3v8q0 3-3 3H9l-4 4v-4H3q-3 0-3-3V3q0-3 3-3z" fill="#a9a9a9" /></svg>
        </ToolIcon>
        <Text $s={13}>채팅</Text>
      </Tool>
      <Tool $w={68} $on>
        <ToolIcon>
          <svg width="24" height="18" viewBox="0 0 24 18"><rect width="24" height="18" rx="3" fill="#23d959" /><path d="M12 14V5M8 8.500l4-4 4 4" fill="none" stroke="#111" strokeWidth="1.800" /></svg>
        </ToolIcon>
        <Text $s={13}>화면 공유</Text>
      </Tool>
      <Tool $w={136}>
        <ToolIcon>
          <svg width="24" height="18" viewBox="0 0 24 18"><rect width="24" height="18" rx="3" fill="#a9a9a9" /><text x="12" y="13" textAnchor="middle" fontSize="10.500" fontWeight="700" fontFamily="Liberation Sans" fill="#1a1a1a">CC</text></svg>
        </ToolIcon>
        <Text $s={13}>실시간 대화 내용</Text>
      </Tool>
      <Tool $w={50}>
        <ToolIcon>
          <svg width="22" height="20" viewBox="0 0 22 20">
            <circle cx="10.500" cy="10.500" r="9" fill="#a9a9a9" />
            <circle cx="7.500" cy="8.500" r="1.200" fill="#1a1a1a" /><circle cx="13.500" cy="8.500" r="1.200" fill="#1a1a1a" />
            <path d="M6 12q4.500 5 9 0" fill="none" stroke="#1a1a1a" strokeWidth="1.400" />
            <path d="M18.500 0v7M15 3.500h7" stroke="#1a1a1a" strokeWidth="4" /><path d="M18.500 0v7M15 3.500h7" stroke="#a9a9a9" strokeWidth="1.500" />
          </svg>
        </ToolIcon>
        <Text $s={13}>반응</Text>
      </Tool>
      <Leave>나가기</Leave>
    </ToolBar>
  </Meeting>
);

/* ---------- taskbar ---------- */
const Watermark = styled.div`
  position: absolute;
  left: 1505px;
  top: 945px;
  display: flex;
  flex-direction: column;
  line-height: 23px;
  color: rgba(160, 162, 166, 0.75);
`;
const Taskbar = styled.nav`
  position: absolute;
  left: 0;
  bottom: 0;
  width: 1920px;
  height: 40px;
  display: flex;
  align-items: center;
  background: #010307;
  color: #fff;
`;
const Task = styled.div`
  position: relative;
  width: ${(p) => p.$w || 48}px;
  height: 40px;
  display: grid;
  place-items: center;
  padding-top: 2px;
  margin-left: ${(p) => p.$ml || 0}px;
  background: ${(p) => (p.$on ? "#35383d" : "transparent")};
  border-bottom: ${(p) => (p.$run ? "2px solid #fbd777" : "2px solid transparent")};
`;
const Tray = styled.div`
  margin-left: auto;
  display: flex;
  align-items: center;
`;
const Clock = styled.div`
  width: 80px;
  display: flex;
  flex-direction: column;
  align-items: center;
  line-height: 18px;
`;
const Peek = styled.div`
  width: 1px;
  height: 40px;
  margin: 0 3px 0 21px;
  background: #4c5057;
`;

export default function App() {
  return (
    <Desktop>
      <Global />
      <IconColumn $x={0}>
        {shortcuts.map((s) => (
          <Shortcut key={s.name}>
            <Art>
              <ArtPad $on={s.pad}>{s.art}</ArtPad>
              {s.link && <ShortcutArrow />}
            </Art>
            <Label $ls={s.ls}>{s.name}</Label>
          </Shortcut>
        ))}
      </IconColumn>
      <IconColumn $x={76}>
        <Shortcut>
          <Art>
            <ArtPad $on><Obs /></ArtPad>
            <ShortcutArrow />
          </Art>
          <Label>OBS Studio</Label>
        </Shortcut>
        <Gap $h={8} />
        <Sliver $h={35} $bg="#f5c400" />
        <Sliver $h={12} $bg="#9aa0a8" />
        <Gap $h={179} />
        <Sliver $h={10} $bg="#f0a21a" />
        <Gap $h={7} />
        <Sliver $h={12} $bg="#8f9db0" />
        <Gap $h={3} />
        <Label>SAP Logon</Label>
      </IconColumn>

      <BackEdge />
      <OldPad>
        <OldTitle>
          <NotepadIcon size={14} />
          <Gap $w={6} />
          <Text $ls={0.3} $ws={1}>SAP 220226 - 메모장</Text>
          <Controls gap={34} c="#8f8f8f" />
        </OldTitle>
        <OldMenu>
          {["파일(F)", "편집(E)", "서식(O)", "보기(V)", "도움말(H)"].map((m) => (
            <Text key={m} $ls={0.4}>{m}</Text>
          ))}
        </OldMenu>
        <OldText>
          SELECT carrid connid cityfrom cityto
          <OldScroll><Up c="#444" /></OldScroll>
        </OldText>
      </OldPad>
      <MainSap />
      <CreateDialog />
      <ZoomWindow />
      <ShieldBadge>
        <svg width="13" height="14" viewBox="0 0 13 14">
          <path d="M6.500 0L13 2v5q0 4.500-6.500 7Q0 11.500 0 7V2z" fill="#23d959" />
          <path d="M3.500 7l2.200 2.200L9.500 5" fill="none" stroke="#1c3a25" strokeWidth="1.700" />
        </svg>
      </ShieldBadge>
      <Tooltip><Text $s={13} $ls={0.75} $ws={1.5}>오디오에 연결하려면 클릭</Text></Tooltip>

      <Watermark>
        <Text $s={20} $ls={0.3} $ws={2}>Windows 정품 인증</Text>
        <Text $s={15} $ls={0.65} $ws={0.6}>[설정]으로 이동하여 Windows를 정품 인증합니다.</Text>
      </Watermark>

      <Taskbar>
        <Task>
          <svg width="16" height="16" viewBox="0 0 16 16"><path d="M0 2.300l6.500-.9v6.100H0zM7.300 1.300L16 0v7.500H7.300zM0 8.300h6.500v6.200L0 13.600zM7.300 8.300H16V16l-8.700-1.300z" fill="#fff" /></svg>
        </Task>
        <Task>
          <svg width="16" height="16" viewBox="0 0 16 16"><circle cx="10" cy="6" r="5" fill="none" stroke="#fff" strokeWidth="1.200" /><path d="M6.500 9.500L.5 15.500" stroke="#fff" strokeWidth="1.300" /></svg>
        </Task>
        <Task>
          <svg width="20" height="14" viewBox="0 0 20 14"><path d="M4.500.7h11v12.600h-11zM3 2.500H.7v9H3M17 2.500h2.300v9H17" fill="none" stroke="#fff" strokeWidth="1.200" /></svg>
        </Task>
        <Task $w={40} $ml={7} $run>
          <svg width="22" height="22" viewBox="0 0 22 22"><path d="M7 1l13 2-4 18-15-6z" fill="#7fc4cf" /><path d="M7 1l11 2-4 15-12-4z" fill="#c5ecef" /><path d="M14 5l4-1-4 14-8-2z" fill="#3f97a5" /><path d="M20 3l2 16-6 2z" fill="#cda76b" /></svg>
        </Task>
        <Task $w={40} $ml={9} $run>
          <svg width="24" height="12" viewBox="0 0 24 12"><path d="M0 0h24l-8 12H0z" fill="#3f78ad" /><path d="M0 4h17l-5 5H0z" fill="#fdb913" /></svg>
        </Task>
        <Task $w={48} $ml={5} $on $run><ZoomMark size={23} /></Task>
        <Task $w={40} $ml={5} $run>
          <svg width="24" height="24" viewBox="0 0 24 24">
            <rect width="24" height="24" fill="#fbe300" />
            <path d="M12 3.500c5 0 9.500 3 9.500 7s-4.500 7-9.500 7L7.500 21l.7-4C5 16 2.500 13.500 2.500 10.500c0-4 4.500-7 9.500-7z" fill="#3b1e1e" />
            <text x="12" y="13" textAnchor="middle" fontSize="6.500" fontWeight="700" fontFamily="Liberation Sans" fill="#fbe300">TALK</text>
          </svg>
        </Task>
        <Tray>
          <svg width="12" height="8" viewBox="0 0 12 8"><path d="M.7 7L6 1.500 11.300 7" fill="none" stroke="#fff" strokeWidth="1.300" /></svg>
          <Gap $w={10} />
          <svg width="17" height="14" viewBox="0 0 17 14"><path d="M3 12q-3-1-2-4 1-2 3-2 1-4 5-4 3 0 4 3 4 1 3 5-1 2-3 2z" fill="#777" /><path d="M1 0l15 14" stroke="#ddd" strokeWidth="1.300" /></svg>
          <Gap $w={8} />
          <svg width="15" height="16" viewBox="0 0 15 16"><path d="M7.500 0L15 2v5q0 6-7.500 9Q0 13 0 7V2z" fill="#fff" /><path d="M7.500 0v16M0 7.500h15" stroke="#010307" strokeWidth="1.200" /></svg>
          <Gap $w={8} />
          <svg width="17" height="15" viewBox="0 0 17 15"><path d="M5 2.500h11v8H5M10.500 10.500v3.500M7 14h7M.7.700h4v3.500h-4zM2.700 4.500V14h2" fill="none" stroke="#fff" strokeWidth="1.200" /></svg>
          <Gap $w={7} />
          <svg width="17" height="16" viewBox="0 0 17 16"><path d="M.7 5.500h2.500L7 2v11L3.200 9.500H.7z" fill="none" stroke="#fff" strokeWidth="1.200" /><circle cx="12" cy="11" r="4.800" fill="#e02b38" /><path d="M10 9l4 4M14 9l-4 4" stroke="#fff" strokeWidth="1.300" /></svg>
          <Gap $w={7} />
          <Text $s={15}>가</Text>
          <Gap $w={3} />
          <Clock>
            <Text $ls={-0.1}>오후 5:14</Text>
            <Text $ls={-0.3}>2022-02-26</Text>
          </Clock>
          <Gap $w={12} />
          <svg width="16" height="17" viewBox="0 0 16 17"><path d="M.7.700h14.600v11.600H11L8 15.500 5 12.300H.7z" fill="none" stroke="#fff" strokeWidth="1.300" /></svg>
          <Peek />
        </Tray>
      </Taskbar>
    </Desktop>
  );
}
